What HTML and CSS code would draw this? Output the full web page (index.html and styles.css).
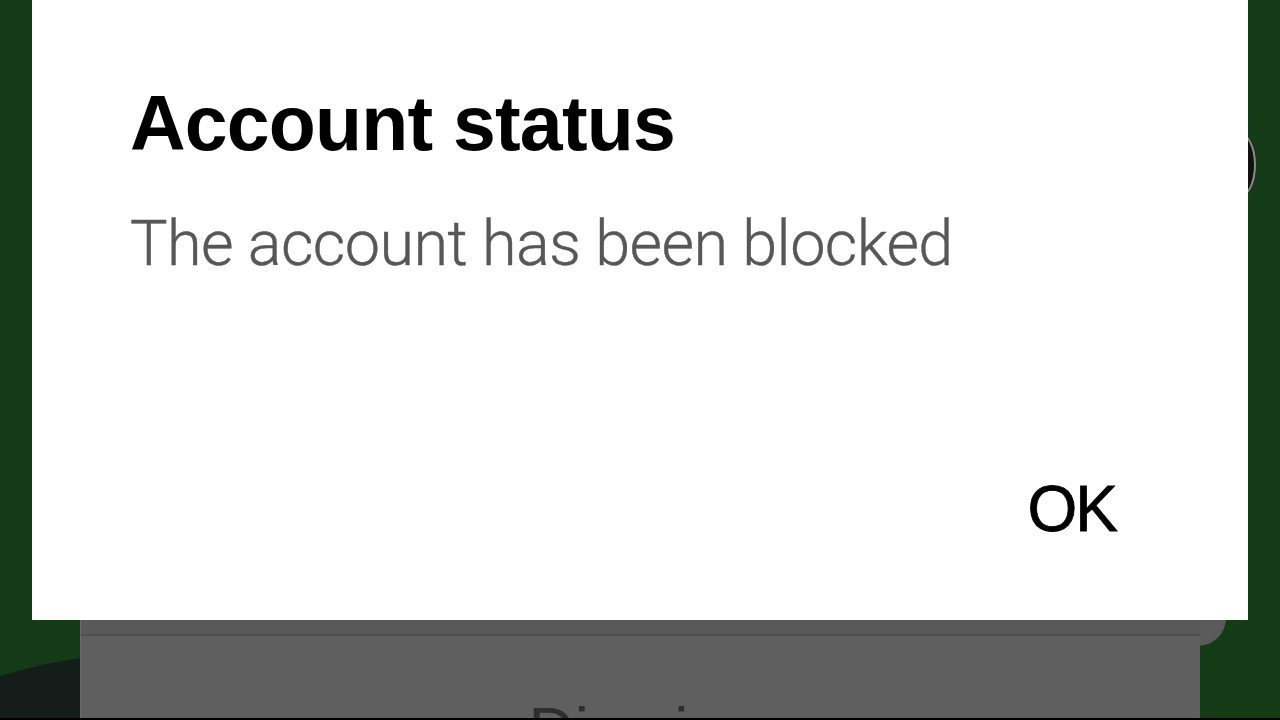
FILE: index.html
```html
<!DOCTYPE html>
<html lang="en">
<head>
  <meta charset="UTF-8" />
  <meta name="viewport" content="width=device-width, initial-scale=1.0"/>
  <title>Account status</title>
  <link rel="stylesheet" href="styles.css">
</head>
<body>
  <!-- fondo detrás del diálogo -->
  <div class="shade"></div>
  <div class="ring"></div>
  <div class="corner"></div>

  <div class="dialog" role="dialog" aria-labelledby="dlg-title">
    <h1 id="dlg-title">Account status</h1>
    <p class="msg">The account has been blocked</p>
    <div class="actions">
      <button class="ok">OK</button>
    </div>
  </div>

  <div class="sheet">
    <div class="sheet-top"></div>
    <div class="sheet-label">Dismiss</div>
  </div>
</body>
</html>
```

FILE: styles.css
```css
* {
  box-sizing: border-box;
}
html, body {
  height: 100%;
}
body {
  margin: 0;
  background: #133b15;
  font-family: Roboto, 'Noto Sans', sans-serif;
  position: relative;
  overflow: hidden;
  border-bottom: 2px solid #000;
}

/* Dialogo */
.dialog {
  position: relative;
  z-index: 2;
  margin: 0 32px;
  height: 620px;
  background: #fff;
  padding: 85px 132px 79px 98px;
  display: flex;
  flex-direction: column;
}
.dialog h1 {
  margin: 0;
  font-family: 'Liberation Sans', Arial, sans-serif;
  font-size: 77px;
  line-height: 77px;
  font-weight: 700;
  color: #000;
  letter-spacing: -0.8px;
}
.msg {
  margin: 50px 0 0;
  font-size: 63px;
  line-height: 63px;
  color: #575757;
  font-weight: 300;
  letter-spacing: -0.6px;
  -webkit-text-stroke: 0.4px #575757;
}
.actions {
  margin-top: auto;
  display: flex;
  justify-content: flex-end;
}
.ok {
  background: none;
  border: none;
  padding: 0;
  font-family: 'Liberation Sans', Arial, sans-serif;
  font-size: 64px;
  line-height: 64px;
  font-weight: 400;
  letter-spacing: -2px;
  color: #000;
  -webkit-text-stroke: 0.8px #000;
  cursor: pointer;
}

/* Hoja gris de abajo */
.sheet {
  position: relative;
  z-index: 1;
  margin: 0 80px;
  height: 98px;
  background: #5f5f5f;
  border-left: 1px solid #6a6a6a;
  overflow: hidden;
}
.sheet-top {
  height: 16px;
  background: #595959;
  border-bottom: 2px solid #4f4f4f;
}
.sheet-label {
  padding-top: 63px;
  text-align: center;
  font-family: 'Liberation Sans', Arial, sans-serif;
  font-size: 64px;
  line-height: 64px;
  color: #2e2e2e;
}

/* decoracion de fondo */
.shade {
  position: absolute;
  left: 0;
  bottom: 0;
  width: 80px;
  height: 60px;
  background: #151d1a;
  clip-path: polygon(0 30%, 50% 12%, 100% 0, 100% 100%, 0 100%);
}
.ring {
  position: absolute;
  z-index: 1;
  left: 1222px;
  top: 132px;
  width: 34px;
  height: 66px;
  border-radius: 50%;
  border: 2px solid #8a8a8a;
  border-left-color: transparent;
  background: #111;
}
.corner {
  position: absolute;
  left: 1170px;
  top: 590px;
  width: 56px;
  height: 56px;
  border-radius: 50%;
  background: #5a5a5a;
}
```
